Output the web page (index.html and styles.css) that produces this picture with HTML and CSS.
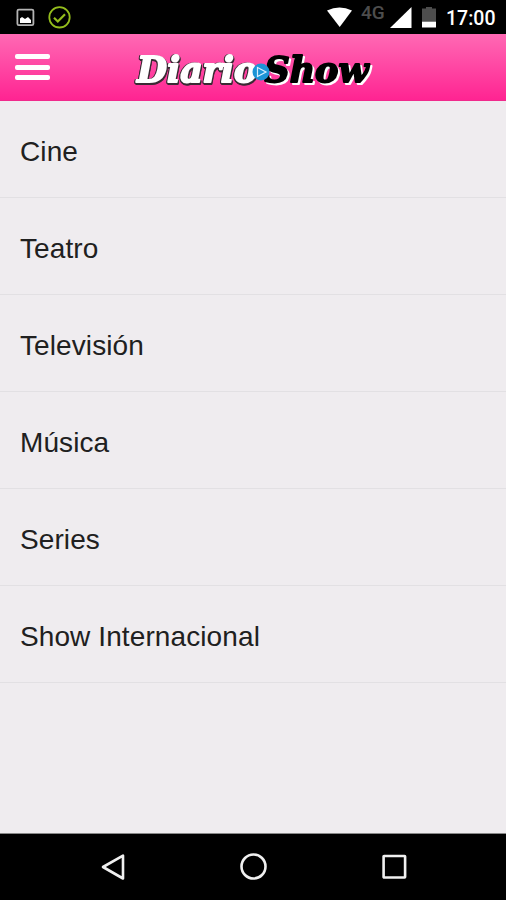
FILE: index.html
```html
<!DOCTYPE html>
<html lang="es">
<head>
  <meta charset="UTF-8">
  <meta name="viewport" content="width=device-width, initial-scale=1.0">
  <title>Diario Show</title>
  <link rel="stylesheet" href="styles.css">
</head>
<body>
  <!-- Barra de estado -->
  <div class="status-bar">
    <svg class="status-left" width="60" height="34" viewBox="0 0 60 34">
      <rect x="5.4" y="9.6" width="16" height="15.6" rx="1.5" fill="none" stroke="#b4b4b4" stroke-width="1.8"/>
      <path d="M8 23v-4.500l2-1.500 3 2 3-2 3 3v3z" fill="#fff"/>
      <circle cx="47.500" cy="17.300" r="10.200" fill="none" stroke="#94bd1c" stroke-width="1.800"/>
      <path d="M42 17.800l3.800 3.700 7.200-7.300" fill="none" stroke="#94bd1c" stroke-width="2.200"/>
    </svg>
    <div class="status-right">
      <svg width="26" height="34" viewBox="0 0 26 34">
        <path d="M0 10.500Q12.500 4.500 25 10.500L12.700 27z" fill="#fff"/>
      </svg>
      <span class="network">4G</span>
      <svg width="22" height="34" viewBox="0 0 22 34">
        <path d="M0 28L21.500 7v21z" fill="#fff"/>
      </svg>
      <svg class="battery" width="14" height="34" viewBox="0 0 14 34">
        <path d="M0 8.500h4V7h6v1.500h4v12.500H0z" fill="#4d4d4d"/>
        <path d="M0 21.500h14v6H0z" fill="#fff"/>
      </svg>
      <span class="clock">17:00</span>
    </div>
  </div>

  <!-- Cabecera -->
  <header class="header">
    <button class="menu-btn" aria-label="Menú">
      <span></span>
      <span></span>
      <span></span>
    </button>
    <svg class="logo" width="246" height="48" viewBox="0 0 246 48" role="img" aria-label="Diario Show">
      <text class="diario" x="6" y="38" textLength="120" lengthAdjust="spacingAndGlyphs">Diario</text>
      <text class="show" x="133.500" y="38" textLength="104" lengthAdjust="spacingAndGlyphs">Show</text>
      <circle cx="130" cy="28" r="8.500" fill="#1c94d6"/>
      <path d="M126.500 23.500v9l8.500-4.500z" fill="none" stroke="#d5efff" stroke-width="1.200"/>
    </svg>
  </header>

  <!-- Secciones -->
  <main class="content">
    <ul class="sections">
      <li>Cine</li>
      <li>Teatro</li>
      <li>Televisión</li>
      <li>Música</li>
      <li>Series</li>
      <li>Show Internacional</li>
    </ul>
  </main>

  <!-- Botones de navegación -->
  <nav class="nav-bar">
    <svg width="28" height="28" viewBox="0 0 28 28"><path d="M5 14L25 2.700v22.800z"/></svg>
    <svg width="28" height="28" viewBox="0 0 28 28"><circle cx="14.500" cy="13.500" r="12"/></svg>
    <svg width="28" height="28" viewBox="0 0 28 28"><rect x="3.600" y="3" width="21.500" height="21.500" rx="0.500"/></svg>
  </nav>
</body>
</html>
```
FILE: styles.css
```css
* {
  box-sizing: border-box;
}

body {
  margin: 0;
  height: 100vh;
  display: flex;
  flex-direction: column;
  overflow: hidden;
  font-family: "Liberation Sans", Arial, sans-serif;
  background: #efecef;
}

svg {
  display: block;
  flex: none;
}

/* ===== Barra de estado ===== */
.status-bar {
  flex: none;
  height: 34px;
  padding: 0 11px 0 12px;
  display: flex;
  justify-content: space-between;
  background: #000;
  color: #fff;
  font-family: Roboto, sans-serif;
}

.status-right {
  display: flex;
  align-items: center;
}

.network {
  width: 25px;
  margin: -9px 4px 0 8px;
  color: #4d4d4d;
  font-size: 19px;
  font-weight: 500;
}

.battery {
  margin-left: 10px;
}

.clock {
  width: 49px;
  margin: 3px 0 0 10px;
  font-size: 19.5px;
  font-weight: 500;
  white-space: nowrap;
}

/* ===== Cabecera ===== */
.header {
  flex: none;
  height: 67px;
  padding: 0 15px;
  display: flex;
  align-items: center;
  background: linear-gradient(#ff69b4, #ff2492);
  border-bottom: 1px solid #f02a8c;
}

.menu-btn {
  width: 35px;
  height: 26px;
  padding: 0;
  display: flex;
  flex-direction: column;
  justify-content: space-between;
  border: 0;
  background: none;
}

.menu-btn span {
  height: 5px;
  border-radius: 2px;
  background: #fff;
}

.logo {
  margin-left: 81px;
  margin-top: 1px;
  overflow: visible;
}

.logo text {
  font-family: "DejaVu Serif", serif;
  font-size: 36px;
  font-weight: bold;
  font-style: italic;
  stroke-width: 1.9px;
  stroke-linejoin: round;
}

.diario {
  fill: #fff;
  stroke: #fff;
  filter: drop-shadow(-1px 0 0 #3a2a34) drop-shadow(1px 1px 0 #3a2a34) drop-shadow(0 1px 0 #3a2a34);
}

.show {
  fill: #000;
  stroke: #000;
  filter: drop-shadow(2px 2px 0 #fff);
}

/* ===== Lista de secciones ===== */
.content {
  flex: 1;
}

.sections {
  margin: 0;
  padding: 0;
  list-style: none;
}

.sections li {
  height: 97px;
  padding: 6px 20px 0;
  display: flex;
  align-items: center;
  border-bottom: 1px solid #e2e0e3;
  color: #202020;
  font-size: 28px;
  letter-spacing: 0.1px;
}

/* ===== Botones de navegación ===== */
.nav-bar {
  flex: none;
  height: 67px;
  padding: 0 98px;
  display: flex;
  align-items: center;
  justify-content: space-between;
  border-top: 1px solid #888;
  background: #000;
}

.nav-bar svg {
  fill: none;
  stroke: #f0f0f0;
  stroke-width: 2.6px;
  stroke-linejoin: round;
}
```
